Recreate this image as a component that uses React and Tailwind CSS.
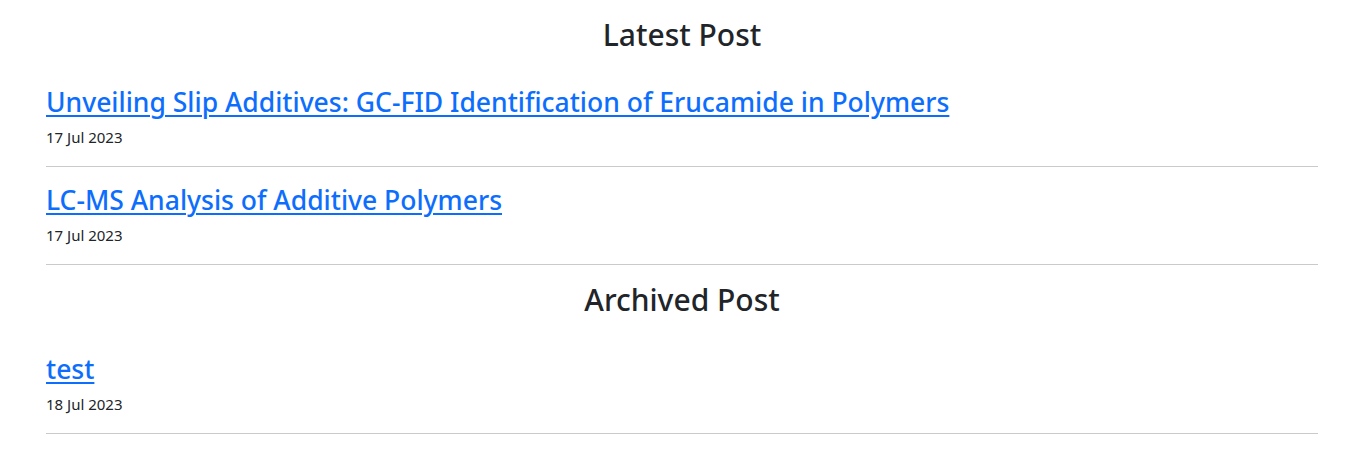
import React from 'react';

const latest = [
  { title: 'Unveiling Slip Additives: GC-FID Identification of Erucamide in Polymers', date: '17 Jul 2023' },
  { title: 'LC-MS Analysis of Additive Polymers', date: '17 Jul 2023' },
];

const archived = [{ title: 'test', date: '18 Jul 2023' }];

// Single post row: linked title, date, divider
const PostItem = ({ title, date }) => (
  <div>
    <a href="#" className="block w-fit text-[26.5px] leading-[34px] font-medium text-[#0d6efd] underline underline-offset-[3px] decoration-[2px]">
      {title}
    </a>
    <p className="mt-[8px] text-[15px] leading-[21px] text-[#212529]">{date}</p>
    <hr className="mt-[18px] border-t border-[#c9cacb]" />
  </div>
);

const App = () => {
  return (
    <div className="min-h-[453px] bg-white pl-[46px] pr-[49px] pt-[16px]" style={{ fontFamily: '"Noto Sans", "Open Sans", sans-serif' }}>
      <h2 className="text-center text-[30px] leading-[38px] font-medium text-[#212529]">Latest Post</h2>
      <div className="mt-[31px]">
        {latest.map((p, i) => (
          <div key={i} className={i > 0 ? 'mt-[16px]' : ''}>
            <PostItem {...p} />
          </div>
        ))}
      </div>
      <h2 className="mt-[16px] text-center text-[30px] leading-[38px] font-medium text-[#212529]">Archived Post</h2>
      <div className="mt-[33px]">
        {archived.map((p, i) => (
          <PostItem key={i} {...p} />
        ))}
      </div>
    </div>
  );
};

export default App;
